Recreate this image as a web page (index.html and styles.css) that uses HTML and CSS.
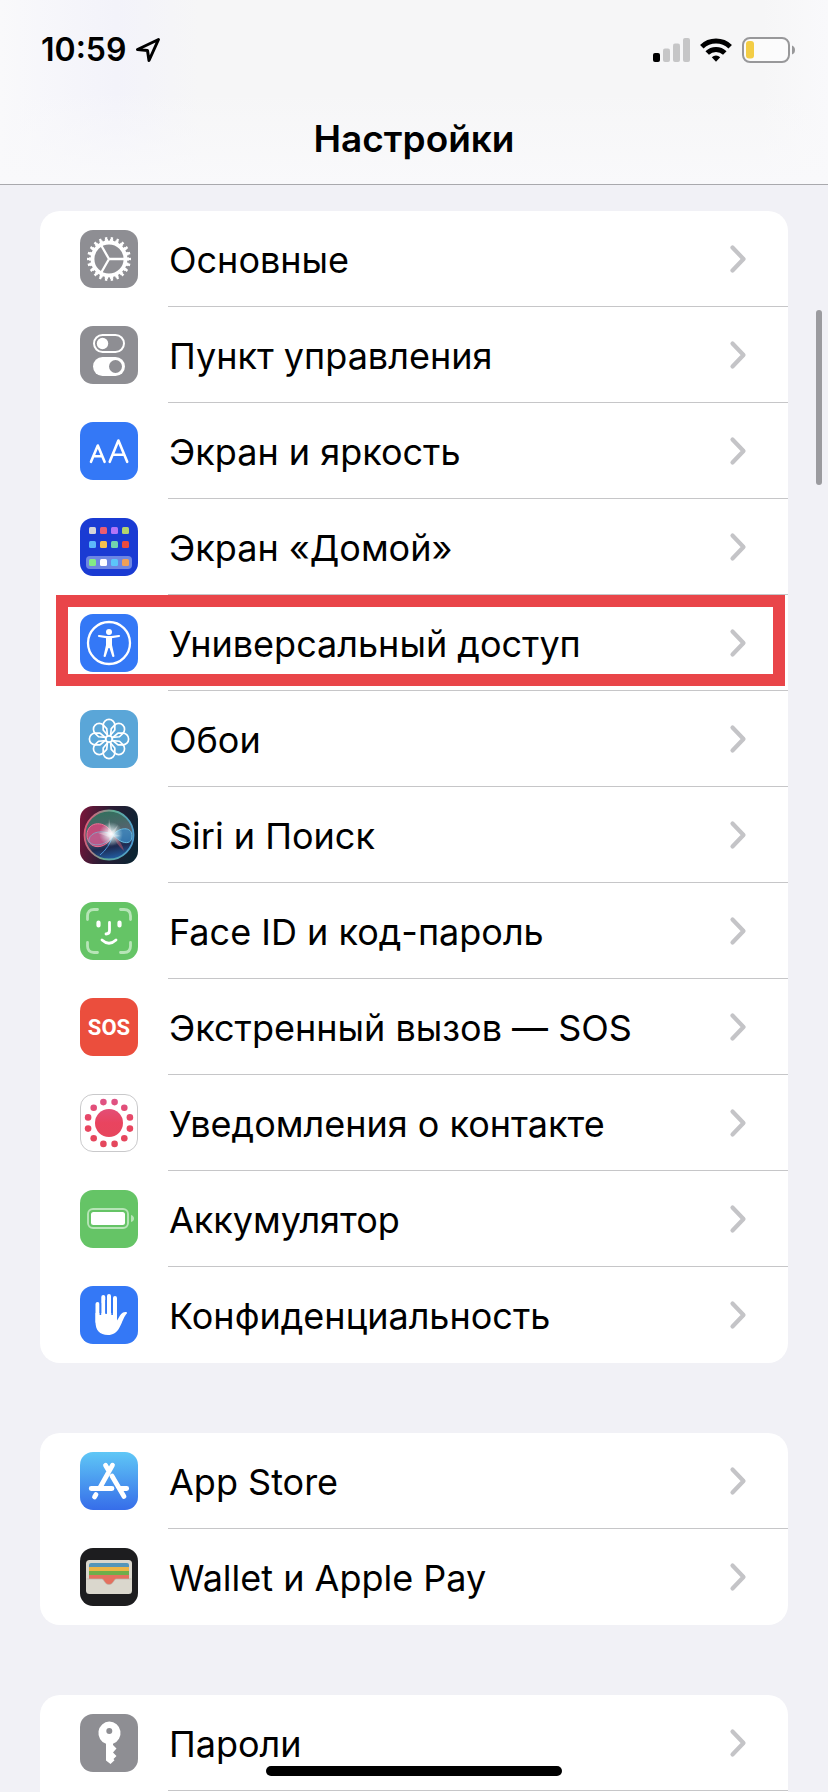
FILE: index.html
```html
<!DOCTYPE html>
<html lang="ru">
<head>
<meta charset="utf-8">
<meta name="viewport" content="width=device-width, initial-scale=1">
<title>Настройки</title>
<link rel="stylesheet" href="styles.css">
</head>
<body>
<svg width="0" height="0" class="sprite" aria-hidden="true">
  <symbol id="chevron" viewBox="0 0 18 30"><path d="M3.500 3.500 14.500 15 3.500 26.500" fill="none" stroke="#c4c4c7" stroke-width="4.200" stroke-linecap="round" stroke-linejoin="round"/></symbol>
</svg>
<div class="screen">
  <header class="header">
    <div class="status">
      <div class="status-left">
        <time class="clock">10:59</time>
        <svg width="26" height="26" viewBox="0 0 26 26" aria-hidden="true"><path d="M23.500 2.500 2.500 12.500 12.500 13.500 14 23.500Z" fill="none" stroke="#000" stroke-width="3" stroke-linejoin="round"/></svg>
      </div>
      <div class="status-right">
        <svg width="37" height="24" viewBox="0 0 37 24" aria-hidden="true"><rect y="15" width="7" height="9" rx="2"/><g fill="#c6c6c7"><rect x="10" y="10.500" width="7" height="13.500" rx="2"/><rect x="20" y="5.500" width="7" height="18.500" rx="2"/><rect x="30" y="0" width="7" height="24" rx="2"/></g></svg>
        <svg width="32" height="24" viewBox="0 0 32 24" aria-hidden="true"><g fill="none" stroke="#000" stroke-width="5"><path d="M1.800 8.800A20.500 20.500 0 0 1 30.200 8.800"/><path d="M7.200 15A12.500 12.500 0 0 1 24.800 15"/></g><path d="M11.800 19.200A6.200 6.200 0 0 1 20.200 19.200L16 23.700Z"/></svg>
        <svg width="54" height="26" viewBox="0 0 54 26" aria-hidden="true"><rect x="1" y="1" width="46" height="24" rx="7" fill="#fff" fill-opacity=".5" stroke="#98989a" stroke-width="2"/><rect x="4" y="4" width="8" height="17.500" rx="3" fill="#f3cd45"/><path d="M50 8.500Q53 9.500 53 13T50 17.500Z" fill="#98989a"/></svg>
      </div>
    </div>
    <h1 class="title">Настройки</h1>
  </header>

  <main class="content">
    <ul class="card">
      <li class="item"><a class="row" href="#general">
        <svg class="icon" viewBox="0 0 58 58" aria-hidden="true"><rect width="58" height="58" rx="13" fill="#8e8e93"/><g fill="none" stroke="#fff"><circle cx="29" cy="29" r="16.500" stroke-width="3.800"/><circle cx="29" cy="29" r="18.500" stroke-width="3" pathLength="198" stroke-dasharray="5.400 3.600" stroke-dashoffset="2.700"/><circle cx="29" cy="29" r="20.700" stroke-width="2.600" pathLength="198" stroke-dasharray="3.600 5.400" stroke-dashoffset="1.800"/><path d="M29 29H45M29 29 21 15M29 29 21 43" stroke-width="2.300"/></g></svg>
        <span class="label">Основные</span><svg class="chevron" aria-hidden="true"><use href="#chevron"/></svg></a></li>
      <li class="item"><a class="row" href="#control">
        <svg class="icon" viewBox="0 0 58 58" aria-hidden="true"><rect width="58" height="58" rx="13" fill="#8e8e93"/><rect x="14" y="9" width="30" height="17" rx="8.500" fill="none" stroke="#fff" stroke-width="2"/><circle cx="22.500" cy="17.500" r="5.700" fill="#fff"/><rect x="13" y="31" width="32" height="19" rx="9.500" fill="#fff"/><circle cx="35.500" cy="40.500" r="6.500" fill="#8e8e93"/></svg>
        <span class="label">Пункт управления</span><svg class="chevron" aria-hidden="true"><use href="#chevron"/></svg></a></li>
      <li class="item"><a class="row" href="#display">
        <svg class="icon" viewBox="0 0 58 58" aria-hidden="true"><rect width="58" height="58" rx="13" fill="#3478f6"/><g fill="none" stroke="#fff" stroke-width="2.600" stroke-linecap="round" stroke-linejoin="round"><path d="M11 39.800 17.800 23.500 24.600 39.800M13.500 34.300H22"/><path d="M29.700 39.800 38.400 18.500 47.200 39.800M33 32.800H43.800"/></g></svg>
        <span class="label">Экран и яркость</span><svg class="chevron" aria-hidden="true"><use href="#chevron"/></svg></a></li>
      <li class="item"><a class="row" href="#home">
        <svg class="icon" viewBox="0 0 58 58" aria-hidden="true"><rect width="58" height="58" rx="13" fill="#1a3bd3"/><rect x="6" y="38" width="46" height="13" rx="4" fill="#6d86e3"/><g><rect x="9" y="9" width="7" height="7" rx="1.500" fill="#d5d5d9"/><rect x="20" y="9" width="7" height="7" rx="1.500" fill="#ea5d72"/><rect x="31" y="9" width="7" height="7" rx="1.500" fill="#b274f7"/><rect x="42" y="9" width="7" height="7" rx="1.500" fill="#b3d36d"/><rect x="9" y="23" width="7" height="7" rx="1.500" fill="#5cb9fa"/><rect x="20" y="23" width="7" height="7" rx="1.500" fill="#f5c04e"/><rect x="31" y="23" width="7" height="7" rx="1.500" fill="#71d2ae"/><rect x="42" y="23" width="7" height="7" rx="1.500" fill="#eb4b3f"/><rect x="9" y="41" width="7" height="7" rx="1.500" fill="#83ec86"/><rect x="20" y="41" width="7" height="7" rx="1.500" fill="#fff"/><rect x="31" y="41" width="7" height="7" rx="1.500" fill="#5cc5fa"/><rect x="42" y="41" width="7" height="7" rx="1.500" fill="#f0a057"/></g></svg>
        <span class="label">Экран «Домой»</span><svg class="chevron" aria-hidden="true"><use href="#chevron"/></svg></a></li>
      <li class="item item-marked"><a class="row" href="#accessibility">
        <svg class="icon" viewBox="0 0 58 58" aria-hidden="true"><rect width="58" height="58" rx="13" fill="#3478f6"/><circle cx="29" cy="29" r="21" fill="none" stroke="#fff" stroke-width="2.300"/><circle cx="29" cy="18" r="3" fill="#fff"/><path d="M19 22 26.500 23.200H31.500L39 22" fill="none" stroke="#fff" stroke-width="2.200" stroke-linecap="round"/><path d="M26 22.500H32V31L34.500 42.300Q33.500 43.600 32.300 42.500L29.500 34H28.500L25.700 42.500Q24.500 43.600 23.500 42.300L26 31Z" fill="#fff"/></svg>
        <span class="label">Универсальный доступ</span><svg class="chevron" aria-hidden="true"><use href="#chevron"/></svg></a></li>
      <li class="item"><a class="row" href="#wallpaper">
        <svg class="icon" viewBox="0 0 58 58" aria-hidden="true"><defs><path id="petal" d="M28 25.800 23.200 20V15.200A5.800 5.800 0 0 1 34.800 15.200V20L30 25.800"/></defs><rect width="58" height="58" rx="13" fill="#5aa6d8"/><g fill="none" stroke="#fff" stroke-width="1.700" stroke-linejoin="round"><circle cx="29" cy="29" r="3.200"/><use href="#petal"/><use href="#petal" transform="rotate(45 29 29)"/><use href="#petal" transform="rotate(90 29 29)"/><use href="#petal" transform="rotate(135 29 29)"/><use href="#petal" transform="rotate(180 29 29)"/><use href="#petal" transform="rotate(225 29 29)"/><use href="#petal" transform="rotate(270 29 29)"/><use href="#petal" transform="rotate(315 29 29)"/></g></svg>
        <span class="label">Обои</span><svg class="chevron" aria-hidden="true"><use href="#chevron"/></svg></a></li>
      <li class="item"><a class="row" href="#siri">
        <svg class="icon" viewBox="0 0 58 58" aria-hidden="true"><defs>
          <linearGradient id="siri-bg" x1="0" y1=".3" x2="1" y2=".5"><stop offset="0" stop-color="#75163a"/><stop offset=".45" stop-color="#2c1c34"/><stop offset="1" stop-color="#0c2433"/></linearGradient>
          <linearGradient id="siri-orb" x1=".4" y1="0" x2=".6" y2="1"><stop offset="0" stop-color="#31705d"/><stop offset=".5" stop-color="#59616f"/><stop offset=".75" stop-color="#1d2b52"/><stop offset="1" stop-color="#2260a8"/></linearGradient>
          <linearGradient id="siri-ring" x1="0" y1=".4" x2="1" y2=".6"><stop offset="0" stop-color="#e05878"/><stop offset=".5" stop-color="#62ad94"/><stop offset="1" stop-color="#4b9bd0"/></linearGradient>
          <radialGradient id="siri-glow"><stop offset="0" stop-color="#fff"/><stop offset=".25" stop-color="#f4ffff" stop-opacity=".8"/><stop offset="1" stop-color="#c9eeee" stop-opacity="0"/></radialGradient></defs>
          <rect width="58" height="58" rx="13" fill="url(#siri-bg)"/><circle cx="29" cy="29" r="24.500" fill="url(#siri-orb)" stroke="url(#siri-ring)" stroke-width="1.800"/>
          <path d="M33 29C26 13 7 15 7 29S25 46 33 29Z" fill="#d6477c" fill-opacity=".85" stroke="#ee7294"/>
          <path d="M33 29C22 23 11 26 9 33S25 43 33 29Z" fill="#b56a9a" fill-opacity=".5" stroke="#79b9d4" stroke-opacity=".7"/>
          <path d="M33 29C39 21 52 20 52 30S41 38 33 29Z" fill="#398cca" fill-opacity=".75" stroke="#65bbdf"/>
          <path d="M33 29Q42 36 44 45Q36 38 33 29Z" fill="#98516b" fill-opacity=".7"/><path d="M20 49Q29 42 33 29" fill="none" stroke="#4c97dc"/>
          <circle cx="31" cy="28" r="12" fill="url(#siri-glow)"/><path d="M29 13 31.500 26 38 19 34 28 41 30 33 31 30 35 29 31 18 27 28 26Z" fill="#fff" fill-opacity=".3"/></svg>
        <span class="label">Siri и Поиск</span><svg class="chevron" aria-hidden="true"><use href="#chevron"/></svg></a></li>
      <li class="item"><a class="row" href="#faceid">
        <svg class="icon" viewBox="0 0 58 58" aria-hidden="true"><rect width="58" height="58" rx="13" fill="#65c466"/><g fill="none" stroke="#fff" stroke-linecap="round"><path stroke="#b7e5b7" stroke-width="2.800" d="M7.500 17.500V14Q7.500 7.500 14 7.500H17.500M40.500 7.500H44Q50.500 7.500 50.500 14V17.500M50.500 40.500V44Q50.500 50.500 44 50.500H40.500M17.500 50.500H14Q7.500 50.500 7.500 44V40.500"/><path stroke-width="4.200" d="M18.500 20.500V23.500M39.500 20.500V23.500"/><path stroke-width="2.800" d="M29.500 20.500V28.500Q29.500 32 26 32M22 38Q29 44.500 36 38"/></g></svg>
        <span class="label">Face ID и код-пароль</span><svg class="chevron" aria-hidden="true"><use href="#chevron"/></svg></a></li>
      <li class="item"><a class="row" href="#sos">
        <span class="icon icon-sos" aria-hidden="true">SOS</span>
        <span class="label">Экстренный вызов — SOS</span><svg class="chevron" aria-hidden="true"><use href="#chevron"/></svg></a></li>
      <li class="item"><a class="row" href="#exposure">
        <svg class="icon" viewBox="0 0 58 58" aria-hidden="true"><defs><linearGradient id="exposure" gradientUnits="userSpaceOnUse" x1="0" y1="5" x2="0" y2="53"><stop offset="0" stop-color="#de5487"/><stop offset=".5" stop-color="#e9445f"/><stop offset="1" stop-color="#e4475c"/></linearGradient></defs><rect x=".5" y=".5" width="57" height="57" rx="12.500" fill="#fff" stroke="#c9c9cb"/><g fill="url(#exposure)"><circle cx="29" cy="29" r="14"/><circle cx="34.600" cy="8.100" r="3.300"/><circle cx="44.300" cy="13.700" r="3.300"/><circle cx="49.900" cy="23.400" r="3.300"/><circle cx="49.900" cy="34.600" r="3.300"/><circle cx="44.300" cy="44.300" r="3.300"/><circle cx="34.600" cy="49.900" r="3.300"/><circle cx="23.400" cy="49.900" r="3.300"/><circle cx="13.700" cy="44.300" r="3.300"/><circle cx="8.100" cy="34.600" r="3.300"/><circle cx="8.100" cy="23.400" r="3.300"/><circle cx="13.700" cy="13.700" r="3.300"/><circle cx="23.400" cy="8.100" r="3.300"/></g></svg>
        <span class="label">Уведомления о контакте</span><svg class="chevron" aria-hidden="true"><use href="#chevron"/></svg></a></li>
      <li class="item"><a class="row" href="#battery">
        <svg class="icon" viewBox="0 0 58 58" aria-hidden="true"><rect width="58" height="58" rx="13" fill="#65c466"/><rect x="8" y="19" width="40" height="19" rx="5" fill="none" stroke="#b7e5b7" stroke-width="1.900"/><rect x="11" y="22" width="34" height="13" rx="2.500" fill="#fff"/><path d="M51 25Q54 26 54 28.500T51 32Z" fill="#b7e5b7"/></svg>
        <span class="label">Аккумулятор</span><svg class="chevron" aria-hidden="true"><use href="#chevron"/></svg></a></li>
      <li class="item"><a class="row" href="#privacy">
        <svg class="icon" viewBox="0 0 58 58" aria-hidden="true"><rect width="58" height="58" rx="13" fill="#3478f6"/><g fill="none" stroke="#fff" stroke-width="4" stroke-linecap="round"><path d="M17.500 18V36M23.300 11V36M29 10V36M35 12V36"/></g><path d="M15.500 27 37 27V34.500C39.500 31 40 28 43 26.500 45 25.500 47.500 26 47 27.200 44 30 42.500 36 39.500 41.500 36.500 47 33 49 28 49 19.500 49 15.500 44 15.500 36Z" fill="#fff"/><path d="M20.400 17V29M26.100 14V28M32.100 14V29" stroke="#3478f6" stroke-width="1.600" fill="none"/></svg>
        <span class="label">Конфиденциальность</span><svg class="chevron" aria-hidden="true"><use href="#chevron"/></svg></a></li>
    </ul>

    <ul class="card">
      <li class="item"><a class="row" href="#appstore">
        <svg class="icon" viewBox="0 0 58 58" aria-hidden="true"><defs><linearGradient id="store" x2="0" y2="1"><stop offset="0" stop-color="#5fc7f6"/><stop offset="1" stop-color="#366de9"/></linearGradient></defs><rect width="58" height="58" rx="13" fill="url(#store)"/><g fill="none" stroke="#fff" stroke-width="4.800" stroke-linecap="round"><path d="M32.500 13.200 19.500 36.500M11.200 36.500H32M41 36.500H46.700M25.500 13.200 28 17.500M32 24 44 44.500M16 42.500 14.500 45"/></g></svg>
        <span class="label">App Store</span><svg class="chevron" aria-hidden="true"><use href="#chevron"/></svg></a></li>
      <li class="item"><a class="row" href="#wallet">
        <svg class="icon" viewBox="0 0 58 58" aria-hidden="true"><rect width="58" height="58" rx="13" fill="#1d1d1f"/><rect x="6" y="12" width="46" height="34" rx="3.500" fill="#dad7cd"/><path d="M9 20V17Q9 15 11 15H47Q49 15 49 17V20Z" fill="#5596b9"/><path d="M9 19H49V24H9Z" fill="#edb546"/><path d="M9 23H49V28H9Z" fill="#6fae4a"/><path d="M9 27H49V31H36C34 31 33.500 36.500 29 36.500S24 31 22 31H9Z" fill="#e4705f"/><path d="M6.500 31H22C24 31 24.500 36.500 29 36.500S34 31 36 31H51.500" fill="none" stroke="#b9b4a9" stroke-width=".7"/></svg>
        <span class="label">Wallet и Apple Pay</span><svg class="chevron" aria-hidden="true"><use href="#chevron"/></svg></a></li>
    </ul>

    <ul class="card card-continued">
      <li class="item"><a class="row" href="#passwords">
        <svg class="icon" viewBox="0 0 58 58" aria-hidden="true"><rect width="58" height="58" rx="13" fill="#8e8e93"/><path fill="#fff" fill-rule="evenodd" d="M29.300 7.500A11.500 11.500 0 0 1 33 29.800V31L36.500 34.500 33 38.500 36.500 42 33.500 45 34.500 46.300 30.500 50 26 46.500V29.800A11.500 11.500 0 0 1 29.300 7.500ZM29.300 14A3 3 0 1 0 29.300 20 3 3 0 0 0 29.300 14Z"/></svg>
        <span class="label">Пароли</span><svg class="chevron" aria-hidden="true"><use href="#chevron"/></svg></a></li>
    </ul>
  </main>
  <div class="scroll-thumb"></div>
  <div class="home-bar"></div>
</div>
</body>
</html>
```
FILE: styles.css
```css
* {
  box-sizing: border-box;
}

body {
  margin: 0;
  background: #f1f1f6;
  color: #000;
  font-family: Inter, "Noto Sans", sans-serif;
}

.sprite {
  position: absolute;
}

.screen {
  position: relative;
  display: flex;
  flex-direction: column;
  min-height: 100vh;
}

.header {
  display: flex;
  flex-direction: column;
  height: 185px;
  border-bottom: 1px solid #a9a9ad;
  background:
    linear-gradient(rgba(249, 249, 251, 0) 50%, #f9f9fb),
    linear-gradient(90deg, #f9f9fb, #f3f3fa 14%, #f6f6f7 24%, #f6f6f7 92%, #f9f9fb);
}

.status {
  display: flex;
  justify-content: space-between;
  align-items: center;
  height: 100px;
  padding: 0 32px 0 41px;
}

.status-left {
  display: flex;
  align-items: center;
  gap: 9px;
}

.status-right {
  display: flex;
  align-items: center;
  gap: 10px;
}

.clock {
  font-size: 32px;
  line-height: 40px;
  font-weight: 600;
}

.title {
  margin: 16px 0 0;
  font-size: 37px;
  line-height: 46px;
  font-weight: 600;
  text-align: center;
}

.content {
  display: flex;
  flex: 1;
  flex-direction: column;
  gap: 70px;
  padding: 26px 40px 0;
}

.card {
  margin: 0;
  padding: 0;
  list-style: none;
  border-radius: 20px;
  background: #fff;
}

.card-continued {
  flex: 1;
  border-radius: 20px 20px 0 0;
}

.item {
  position: relative;
}

.row {
  display: flex;
  align-items: center;
  height: 96px;
  padding: 0 41px 0 40px;
  color: inherit;
  text-decoration: none;
}

.item:not(:last-child)::after,
.card-continued .item::after {
  content: "";
  display: block;
  height: 1px;
  margin: -1px 0 0 128px;
  background: #c6c6c8;
}

.item-marked::before {
  content: "";
  position: absolute;
  inset: 0 3px 5px 16px;
  border: 12px solid #e94549;
}

.icon {
  flex: none;
  width: 58px;
  height: 58px;
  margin-right: 31px;
}

.icon-sos {
  display: flex;
  align-items: center;
  justify-content: center;
  border-radius: 13px;
  background: #eb4e3d;
  color: #fff;
  font-family: Roboto, sans-serif;
  font-size: 22px;
  font-weight: 700;
}

.label {
  flex: 1;
  padding-top: 2px;
  font-size: 36px;
  line-height: 46px;
  white-space: nowrap;
}

.chevron {
  flex: none;
  width: 18px;
  height: 30px;
}

.scroll-thumb {
  position: absolute;
  top: 310px;
  right: 6px;
  width: 6px;
  height: 175px;
  border-radius: 3px;
  background: #9b9b9f;
}

.home-bar {
  position: absolute;
  bottom: 16px;
  left: 50%;
  width: 296px;
  height: 10px;
  margin-left: -148px;
  border-radius: 5px;
  background: #000;
}
```
